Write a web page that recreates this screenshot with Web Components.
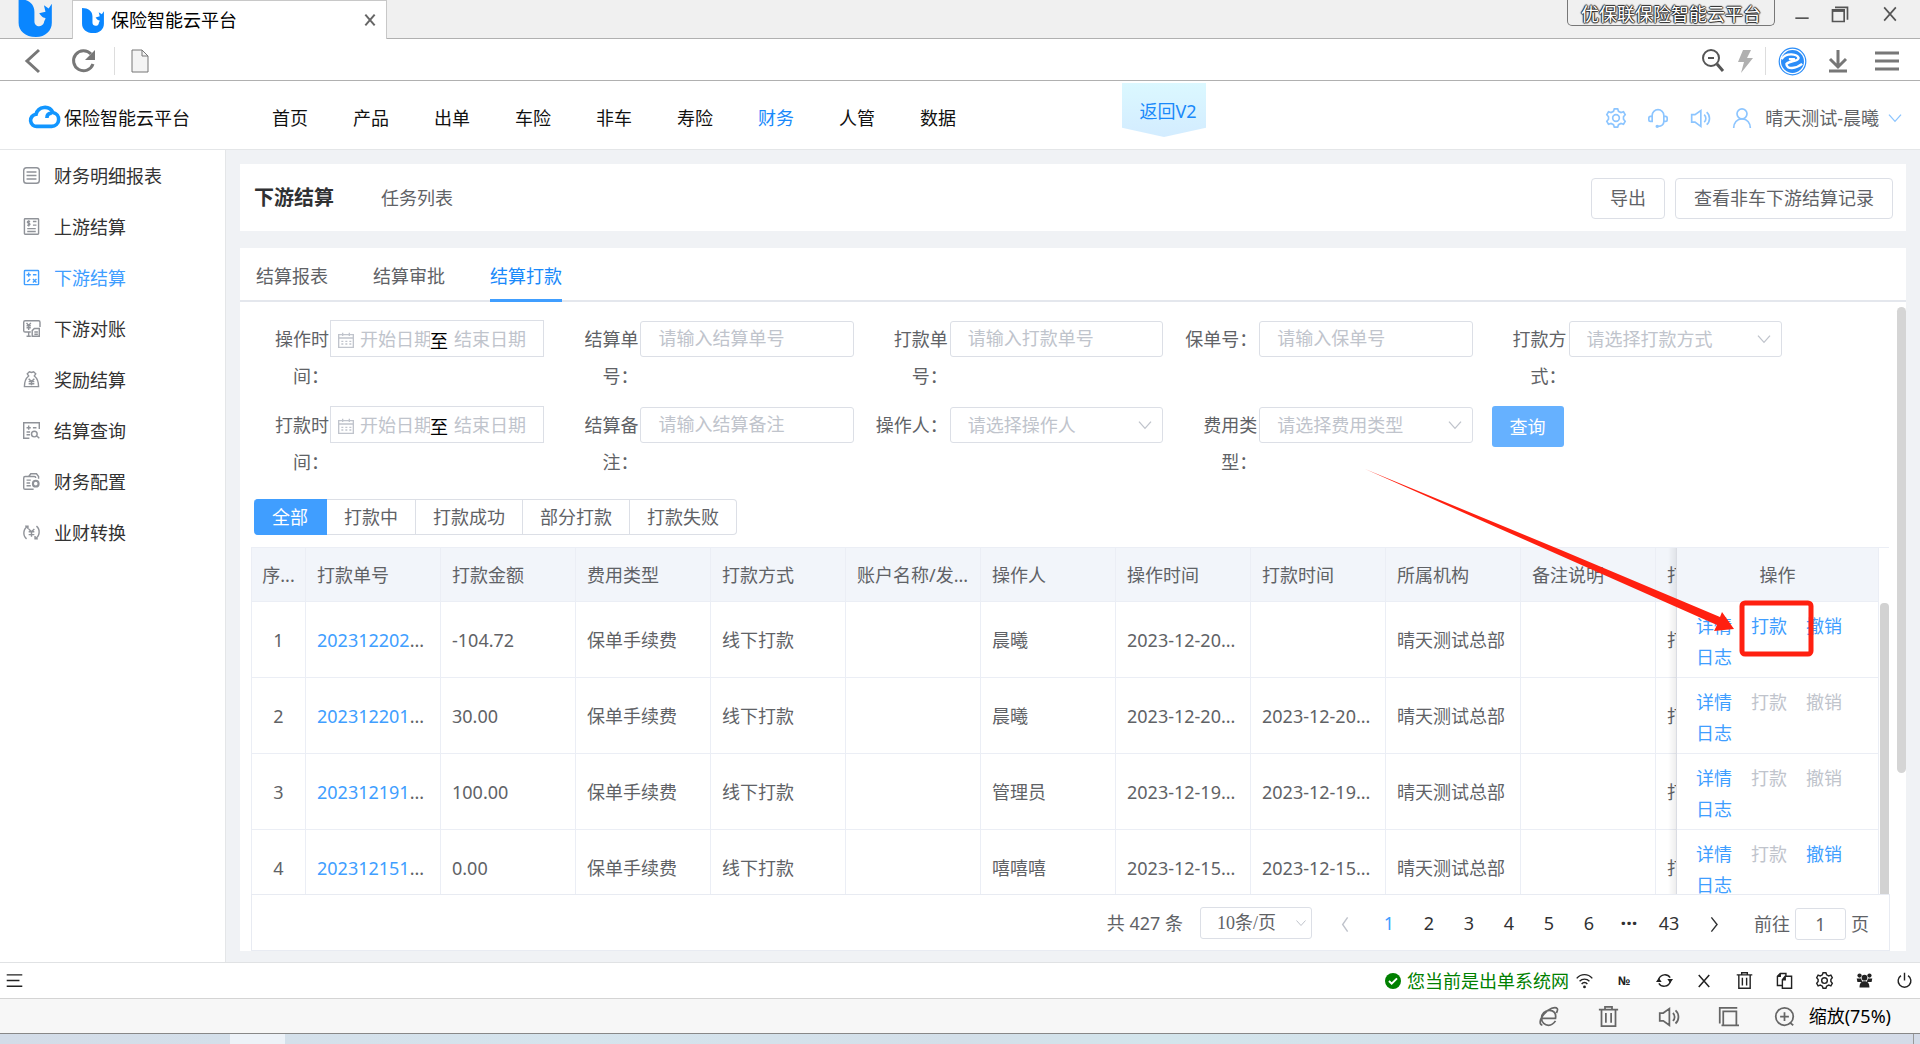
<!DOCTYPE html>
<html lang="zh-CN">
<head>
<meta charset="utf-8">
<title>保险智能云平台</title>
<style>
  html, body {
    margin: 0;
    height: 100%;
  }

  body {
    font: 18px/24px "Noto Sans", "Noto Sans CJK SC", sans-serif;
    color: #606266;
    background: #fff;
    overflow: hidden;
  }
</style>
</head>
<body>
<app-shell></app-shell>

<script>
(() => {
  const define = (name, css, html, setup) => {
    const template = document.createElement("template");
    template.innerHTML = `<style>
      *, *::before, *::after { box-sizing: border-box; }
      button, input, select { font: inherit; color: inherit; margin: 0; }
      button { padding: 0; border: 0; background: none; cursor: pointer; }
      a { color: inherit; text-decoration: none; }
      ${css}
    </style>${html}`;

    customElements.define(name, class extends HTMLElement {
      constructor() {
        super();
        this.attachShadow({ mode: "open" }).appendChild(template.content.cloneNode(true));
      }

      connectedCallback() {
        if (setup && !this._ready) {
          this._ready = true;
          setup(this, this.shadowRoot);
        }
      }
    });
  };

  // All icons sit on a 24 grid and take the current colour.
  const ICONS = {
    logo: '<path fill="#0a86ff" stroke="none" d="M1 0C7 0 11 3 11 8V14C11 18 16 18 17 15C17 14 18 13 18 12C16 12 15 10 14 9L18 8L17 4L20 6L22 3V15C22 20 18 24 12 24C5 24 1 20 1 15Z"/>',
    close: '<path d="M5 4L19 20M19 4L5 20"/>',
    back: '<path d="M17 1L5 12L17 23"/>',
    reload: '<path d="M21 15A10 10 0 1 1 19 5"/><path fill="currentColor" stroke="none" d="M23 1V11H13Z"/>',
    page: '<path fill="#f4f4f4" d="M3 1H13L19 7V23H3Z"/><path d="M13 1V7H19"/>',
    min: '<path d="M4 17H20"/>',
    restore: '<path d="M3 7H17V21H3Z"/><path d="M3 8H17" stroke-width="3"/><path d="M6 4H21V19"/>',
    zoomout: '<circle cx="10" cy="9" r="8"/><path d="M7 9H13"/><path stroke-width="3" d="M16 15L22 22"/>',
    bolt: '<path fill="currentColor" stroke="none" d="M10 1H18L14 9H20L8 24L11 13H5Z"/>',
    browser: '<circle cx="12" cy="12" r="11" stroke-width="1"/><circle cx="12" cy="12" r="9.500" fill="currentColor" stroke="none"/><path stroke="#fff" stroke-width="2" d="M3 10C7 4 16 6 17 9C17 12 10 11 7 14C7 19 15 18 20 14M9 10H14"/>',
    download: '<path d="M12 1V18M4 10L12 18L20 10M3 22H21"/>',
    menu: '<path d="M0 4H24M0 12H24M0 20H24"/>',
    cloud: '<path d="M6 21A5 5 0 0 1 5 11A7.500 7.500 0 0 1 19 9.500A5.800 5.800 0 0 1 18 21ZM18 10C15 10 14 12 14 14"/>',
    gear: '<path d="M10 1H14L15 4L18 5.500L21 4.500L23 8L21 10.500V13.500L23 16L21 19.500L18 18.500L15 20L14 23H10L9 20L6 18.500L3 19.500L1 16L3 13.500V10.500L1 8L3 4.500L6 5.500L9 4Z"/><circle cx="12" cy="12" r="4"/>',
    headset: '<path d="M5 16H3A2 2 0 0 1 1 14V12A2 2 0 0 1 3 10H5ZM5 11V9A7 7 0 0 1 19 9V16C19 20 16 22 12 22M19 10H21A2 2 0 0 1 23 12V14A2 2 0 0 1 21 16H19"/><circle cx="11" cy="22" r="1"/>',
    sound: '<path d="M2 8H6L13 3V22L6 17H2ZM17 8A6 6 0 0 1 17 17M20 5A10 10 0 0 1 20 20"/>',
    user: '<circle cx="12" cy="7" r="6"/><path d="M2 24C2 18 6 13 12 13S22 18 22 24"/>',
    down: '<path d="M3 7L12 17L21 7"/>',
    left: '<path d="M15 2L8 12L15 22"/>',
    right: '<path d="M9 2L17 12L9 22"/>',
    report: '<rect x="1" y="1" width="22" height="22" rx="4"/><path d="M5 7H19M5 12H19M5 17H19"/>',
    bill: '<rect x="2" y="1" width="20" height="22" rx="1"/><path d="M10 5C6 3 5 7 8 7.500S10 11 6 10M8 3V12M14 5H19M14 10H19M6 15H18M6 19H18"/>',
    calc: '<rect x="2" y="2" width="20" height="20" rx="1"/><path d="M5 8H11M8 5V11M14 8H19M6 18L10 14M14 14L19 19M19 14L14 19"/>',
    monitor: '<path d="M11 17H3A2 2 0 0 1 1 15V3A2 2 0 0 1 3 1H22A2 2 0 0 1 24 3V10M5 23H11M8 17V23M5 4L8 8L11 4M5 8H11M5 11H11M8 8V14"/><path d="M16 12H23V23H13V15ZM16 17H21M16 20H21"/>',
    bag: '<path d="M8 7L6 4L9 1L12 2L15 1L18 4L16 7C21 11 22 16 22 22H2C2 16 3 11 8 7ZM8 11L12 15L16 11M8 15H16M8 18H16M12 15V20"/>',
    query: '<path stroke-width="2" d="M9 23H1V1H23V10M5 8H11M8 5V11M14 8H19M5 14H10M5 18H10M20 20L23 23"/><circle cx="16" cy="17" r="4" stroke-width="2"/>',
    config: '<path d="M15 23H3A2 2 0 0 1 1 21V7A2 2 0 0 1 3 5H16A2 2 0 0 1 18 7M8 5L11 1H19L22 5V8M5 10H11M5 14H10M5 18H11"/><circle cx="18" cy="15" r="4" stroke-width="3"/>',
    convert: '<path d="M7 3A11 11 0 0 0 5 21M3 3H7V7M17 21A11 11 0 0 0 19 3M21 21H17V17M8 7L12 11L16 7M8 11H16M8 15H16M12 11V18"/>',
    calendar: '<path d="M1 4H23V23H1ZM1 9H23M7 1V6M17 1V6"/><path stroke-dasharray="3 3" d="M5 14H20M5 18H20"/>',
    lines: '<path d="M1 4H23M1 12H19M1 20H23"/>',
    check: '<circle cx="12" cy="12" r="12" fill="currentColor" stroke="none"/><path stroke="#fff" stroke-width="3" d="M6 12L10 16L18 8"/>',
    wifi: '<path d="M1 9C7 2 17 2 23 9M5 13C9 9 15 9 19 13M8 17C10 14 14 14 16 17"/><circle cx="12" cy="21" r="1"/>',
    refresh: '<path stroke-width="2" d="M4 10A9 9 0 0 1 20 8M20 14A9 9 0 0 1 4 16"/><path fill="currentColor" stroke="none" d="M0 14L4 8L8 14ZM16 10H24L20 16Z"/>',
    trash: '<path d="M1 4H23M8 4V1H16V4M4 4V23H20V4M9 8V19M15 8V19"/>',
    copy: '<path d="M8 19H2V6L6 2H14V5M6 2V6H2M9 11L13 6H22V23H9ZM13 6V11H9"/>',
    users: '<g fill="currentColor" stroke="none"><circle cx="5" cy="5" r="3"/><circle cx="19" cy="5" r="3"/><circle cx="12" cy="8" r="4"/><path d="M1 9H7L9 14H2ZM23 9H17L15 14H22ZM5 22C5 15 8 13 12 13S19 15 19 22Z"/></g>',
    power: '<path d="M7 5A9 9 0 1 0 17 5M12 1V12"/>',
    iebrowser: '<path d="M4 14H20C21 8 18 5 13 5S4 9 4 14S8 22 12 22S18 20 20 17M5 22C1 21 2 15 7 9S20 0 22 3C23 4 22 6 21 8"/>',
    windows: '<path d="M6 6H21V22H6ZM2 20V2H22M4 22H24"/>',
    zoomin: '<circle cx="12" cy="12" r="10"/><path d="M7 12H17M12 7V17M18 19L22 22"/>'
  };

  define("ui-icon", `
    :host { display: inline-flex; flex: none; width: var(--size, 20px); height: var(--size, 20px); }
    svg { width: 100%; height: 100%; fill: none; stroke: currentColor; stroke-width: var(--stroke, 1); overflow: visible; }
  `, `<svg viewBox="0 0 24 24" aria-hidden="true"></svg>`, (host, root) => {
    root.querySelector("svg").innerHTML = ICONS[host.getAttribute("name")] || "";
  });

  define("browser-tabs", `
    :host { display: flex; height: 39px; background: #f0f0f0; border-bottom: 1px solid #b0b0b0; color: #000; }
    .app { --size: 38px; margin: 0 17px; margin-top: -1px; }
    .tab { display: flex; align-items: center; width: 315px; height: 39px; padding: 0 8px; background: #fff; border: 1px solid #c8c8c8; border-bottom: 0; }
    .tab ui-icon { --size: 25px; margin-right: 5px; }
    .tab button { margin-left: auto; display: flex; color: #666; }
    .tab button ui-icon { --size: 16px; --stroke: 3; margin: 0; }
    .window { margin-left: auto; display: flex; align-items: flex-start; padding-right: 20px; color: #555; }
    .badge { height: 26px; padding: 0 13px; line-height: 28px; border: 1px solid #777; border-top: 0; border-radius: 0 0 5px 5px; color: #fff; text-shadow: 1px 0 1px #222, -1px 0 1px #222, 0 1px 1px #222, 0 -1px 1px #222; }
    .window button { display: flex; margin-top: 4px; }
    .window ui-icon { --size: 20px; --stroke: 2; }
    .buttons { display: flex; gap: 18px; margin-left: 17px; }
    .buttons button:last-child { margin-left: 12px; }
  `, `
    <ui-icon class="app" name="logo"></ui-icon>
    <div class="tab">
      <ui-icon name="logo"></ui-icon><span>保险智能云平台</span>
      <button aria-label="关闭标签"><ui-icon name="close"></ui-icon></button>
    </div>
    <div class="window">
      <span class="badge">优保联保险智能云平台</span>
      <div class="buttons">
        <button aria-label="最小化"><ui-icon name="min"></ui-icon></button>
        <button aria-label="还原"><ui-icon name="restore"></ui-icon></button>
        <button aria-label="关闭"><ui-icon name="close"></ui-icon></button>
      </div>
    </div>
  `);

  define("browser-bar", `
    :host { display: flex; align-items: center; height: 42px; padding: 3px 21px 0 22px; border-bottom: 1px solid #b0b0b0; color: #777; }
    button { display: flex; }
    ui-icon { --size: 24px; --stroke: 3; }
    .sep { width: 1px; height: 28px; background: #ddd; }
    .left, .right { display: flex; align-items: center; }
    .left { gap: 26px; }
    .left .sep { margin: 0 -12px 0 -8px; }
    .left ui-icon[name=page] { --stroke: 1; }
    .right { margin-left: auto; gap: 12px; }
    .right ui-icon[name=bolt] { color: #b0b0b0; margin: 0 -4px; }
    .right ui-icon[name=zoomout] { --stroke: 2; color: #555; }
    .right ui-icon[name=browser] { --size: 29px; color: #2b8df8; }
    .right button:nth-of-type(4) { margin-left: 7px; }
    .right button:nth-of-type(5) { margin-left: 13px; }
  `, `
    <div class="left">
      <button aria-label="后退"><ui-icon name="back"></ui-icon></button>
      <button aria-label="刷新"><ui-icon name="reload"></ui-icon></button>
      <span class="sep"></span>
      <ui-icon name="page"></ui-icon>
    </div>
    <div class="right">
      <button aria-label="缩小"><ui-icon name="zoomout"></ui-icon></button>
      <button aria-label="加速"><ui-icon name="bolt"></ui-icon></button>
      <span class="sep"></span>
      <button aria-label="内核"><ui-icon name="browser"></ui-icon></button>
      <button aria-label="下载"><ui-icon name="download"></ui-icon></button>
      <button aria-label="菜单"><ui-icon name="menu"></ui-icon></button>
    </div>
  `);

  define("app-header", `
    :host { display: flex; align-items: center; height: 69px; padding: 5px 17px 0 30px; border-bottom: 1px solid #e4e6e8; color: #111; }
    .brand { display: flex; align-items: center; gap: 5px; }
    .brand ui-icon { --size: 29px; --stroke: 3; color: #1296ff; margin-top: -4px; }
    nav { display: flex; gap: 45px; margin-left: 82px; }
    nav a { white-space: nowrap; }
    nav .on { color: #1989fa; }
    .ribbon { align-self: flex-start; margin: -3px 0 0 166px; width: 84px; height: 54px; padding: 0 0 0 8px; line-height: 56px; text-align: center; color: #1989fa; background: linear-gradient(#dbf8ff, #d3ecff); clip-path: polygon(0 0, 100% 0, 100% 83%, 50% 100%, 0 83%); }
    .user { display: flex; align-items: center; gap: 22px; margin-left: auto; color: #8cc5ff; }
    .user button { display: flex; }
    .user > * > ui-icon, .user > ui-icon { --stroke: 2; }
    .who { align-items: center; gap: 8px; margin-left: -9px; }
    .who span { color: #606266; }
    .who ui-icon { --size: 16px; }
  `, `
    <div class="brand"><ui-icon name="cloud"></ui-icon><span>保险智能云平台</span></div>
    <nav>
      <a href="#">首页</a><a href="#">产品</a><a href="#">出单</a><a href="#">车险</a><a href="#">非车</a>
      <a href="#">寿险</a><a href="#" class="on">财务</a><a href="#">人管</a><a href="#">数据</a>
    </nav>
    <a class="ribbon" href="#">返回V2</a>
    <div class="user">
      <button aria-label="设置"><ui-icon name="gear"></ui-icon></button>
      <button aria-label="客服"><ui-icon name="headset"></ui-icon></button>
      <button aria-label="公告"><ui-icon name="sound"></ui-icon></button>
      <ui-icon name="user"></ui-icon>
      <button class="who"><span>晴天测试-晨曦</span><ui-icon name="down"></ui-icon></button>
    </div>
  `);

  define("side-item", `
    :host { display: block; color: #333; }
    :host([active]) { color: #409eff; }
    a { display: flex; align-items: center; gap: 14px; height: 51px; padding-left: 23px; }
    ui-icon { --size: 17px; --stroke: 2; color: #909399; }
    :host([active]) ui-icon { color: #409eff; }
  `, `<a href="#"><ui-icon></ui-icon><slot></slot></a>`, (host, root) => {
    const old = root.querySelector("ui-icon");
    const icon = document.createElement("ui-icon");
    icon.setAttribute("name", host.getAttribute("icon"));
    old.replaceWith(icon);
  });

  define("side-nav", `
    :host { display: block; width: 226px; flex: none; background: #fff; border-right: 1px solid #e4e6e8; }
  `, `
    <nav>
      <side-item icon="report">财务明细报表</side-item>
      <side-item icon="bill">上游结算</side-item>
      <side-item icon="calc" active>下游结算</side-item>
      <side-item icon="monitor">下游对账</side-item>
      <side-item icon="bag">奖励结算</side-item>
      <side-item icon="query">结算查询</side-item>
      <side-item icon="config">财务配置</side-item>
      <side-item icon="convert">业财转换</side-item>
    </nav>
  `);

  define("page-head", `
    :host { display: flex; align-items: center; height: 67px; padding: 1px 13px 0 14px; background: #fff; }
    h1 { margin: 0 47px 0 0; font-size: 20px; color: #303133; }
    .actions { display: flex; gap: 10px; margin-left: auto; }
    button { height: 41px; padding: 0 18px; border: 1px solid #dcdfe6; border-radius: 4px; background: #fff; }
  `, `
    <h1>下游结算</h1><a href="#">任务列表</a>
    <div class="actions"><button>导出</button><button>查看非车下游结算记录</button></div>
  `);

  define("tab-strip", `
    :host { display: flex; gap: 45px; height: 54px; flex: none; padding-left: 16px; border-bottom: 2px solid #e4e7ed; }
    button { height: 54px; padding-top: 5px; border-bottom: 3px solid transparent; }
    .on { color: #1989fa; border-color: #409eff; }
  `, `<button>结算报表</button><button>结算审批</button><button class="on">结算打款</button>`);

  // One labelled control. kind: text | select | range
  define("filter-field", `
    :host { display: grid; grid-template-columns: 76px 1fr; align-items: start; padding-right: 19px; }
    label { line-height: 37px; padding-top: 1px; text-align: right; padding-right: 1px; }
    .box { display: flex; align-items: center; position: relative; height: 37px; padding-left: 1px; font-family: "Liberation Serif", "Noto Sans CJK SC", serif; color: #c0c4cc; }
    input, select { width: 100%; min-width: 0; padding: 0; border: 0; outline: 0; background: none; appearance: none; }
    input::placeholder { color: #c0c4cc; opacity: 1; }
    .plain { height: 36px; padding: 2px 17px 0; border: 1px solid #dcdfe6; border-radius: 3px; background: #fff; }
    .box > ui-icon[name=down] { --size: 16px; --stroke: 2; position: absolute; right: 10px; pointer-events: none; }
    .range { padding: 2px 0 0 7px; border: 1px solid #dcdfe6; }
    .range ui-icon { --size: 16px; margin-right: 6px; --stroke: 2; }
    .range input { height: 24px; }
    .range input:first-of-type { width: 70px; }
    .range input:last-of-type { flex: 1; }
    .range span { margin-right: 6px; color: #000; font-family: "Noto Sans CJK SC", sans-serif; }
  `, `<label for="control"></label>`, (host, root) => {
    const hint = host.getAttribute("hint");
    const kind = host.getAttribute("kind");
    root.querySelector("label").textContent = host.getAttribute("label");

    const box = document.createElement("div");
    box.className = kind === "range" ? "box range" : "box";
    if (kind === "range") {
      box.innerHTML = `<ui-icon name="calendar"></ui-icon><input id="control" placeholder="开始日期"><span>至</span><input aria-label="结束日期" placeholder="结束日期">`;
    } else if (kind === "select") {
      box.innerHTML = `<select id="control" class="plain"><option>${hint}</option></select><ui-icon name="down"></ui-icon>`;
    } else {
      box.innerHTML = `<input id="control" class="plain" placeholder="${hint}">`;
    }
    root.appendChild(box);
  });

  define("filter-form", `
    :host { display: block; flex: none; padding: 18px 105px 0 14px; }
    form { display: grid; grid-template-columns: repeat(5, 1fr); grid-auto-rows: 74px; row-gap: 12px; }
    button { justify-self: start; width: 72px; height: 41px; border-radius: 3px; background: #66b1ff; color: #fff; }
  `, `
    <form>
      <filter-field kind="range" label="操作时间："></filter-field>
      <filter-field kind="text" label="结算单号：" hint="请输入结算单号"></filter-field>
      <filter-field kind="text" label="打款单号：" hint="请输入打款单号"></filter-field>
      <filter-field kind="text" label="保单号：" hint="请输入保单号"></filter-field>
      <filter-field kind="select" label="打款方式：" hint="请选择打款方式"></filter-field>
      <filter-field kind="range" label="打款时间："></filter-field>
      <filter-field kind="text" label="结算备注：" hint="请输入结算备注"></filter-field>
      <filter-field kind="select" label="操作人：" hint="请选择操作人"></filter-field>
      <filter-field kind="select" label="费用类型：" hint="请选择费用类型"></filter-field>
      <button type="button">查询</button>
    </form>
  `);

  define("status-filter", `
    :host { display: flex; flex: none; margin: 19px 14px 12px; }
    button { height: 36px; padding: 0 17px; border: 1px solid #dcdfe6; border-left: 0; }
    .on { padding: 0 18px; border-color: #409eff; border-radius: 4px 0 0 4px; background: #409eff; color: #fff; }
    button:last-child { border-radius: 0 4px 4px 0; }
  `, `<button class="on">全部</button><button>打款中</button><button>打款成功</button><button>部分打款</button><button>打款失败</button>`);

  const ROWS = [
    ["202312202...", "-104.72", "晨曦", "2023-12-20...", "", [1, 1]],
    ["202312201...", "30.00", "晨曦", "2023-12-20...", "2023-12-20...", [0, 0]],
    ["202312191...", "100.00", "管理员", "2023-12-19...", "2023-12-19...", [0, 0]],
    ["202312151...", "0.00", "嘻嘻嘻", "2023-12-15...", "2023-12-15...", [0, 1]]
  ];

  define("payout-table", `
    :host { display: flex; flex: 1; min-height: 0; margin: 0 17px 0 11px; border-left: 1px solid #ebeef5; border-top: 1px solid #ebeef5; }
    .view { flex: 1; min-width: 0; overflow: hidden; }
    table { width: 1742px; border-collapse: separate; border-spacing: 0; table-layout: fixed; }
    th, td { padding: 0 11px; text-align: left; font-weight: normal; white-space: nowrap; overflow: hidden; background: #fff; border-right: 1px solid #ebeef5; border-bottom: 1px solid #ebeef5; }
    th { height: 54px; background: #f2f5fa; }
    td { height: 76px; }
    .no { width: 54px; padding: 0; text-align: center; }
    .col { width: 135px; }
    .ops { position: sticky; right: 0; width: 203px; overflow: visible; border-left: 1px solid #ebeef5; }
    .ops::before { content: ""; position: absolute; right: 100%; top: 0; bottom: -1px; width: 9px; background: linear-gradient(to left, rgba(0, 0, 0, .08), transparent); }
    th.ops { text-align: center; }
    td.ops { padding: 4px 0 0 19px; }
    .links { display: flex; flex-wrap: wrap; column-gap: 19px; }
    .links button { height: 31px; color: #409eff; }
    .links button:disabled { color: #c0c4cc; }
    a { color: #409eff; }
    .track { width: 10px; padding: 55px 0 0 1px; }
    .thumb { height: 100%; background: #d2d2d2; border-radius: 4px 4px 0 0; }
  `, `
    <div class="view">
      <table>
        <thead><tr><th class="no">序...</th></tr></thead>
        <tbody></tbody>
      </table>
    </div>
    <div class="track"><div class="thumb"></div></div>
  `, (host, root) => {
    const heads = ["打款单号", "打款金额", "费用类型", "打款方式", "账户名称/发...", "操作人", "操作时间", "打款时间", "所属机构", "备注说明", "打"];
    root.querySelector("thead tr").insertAdjacentHTML("beforeend",
      heads.map(h => `<th class="col">${h}</th>`).join("") + `<th class="ops">操作</th>`);

    root.querySelector("tbody").innerHTML = ROWS.map(([id, sum, who, made, paid, can], i) => {
      const number = `<a href="#">${id.slice(0, 9)}</a>${id.slice(9)}`;
      const cells = [number, sum, "保单手续费", "线下打款", "", who, made, paid, "晴天测试总部", "", "打"];
      const off = n => can[n] ? "" : "disabled";
      return `<tr><td class="no">${i + 1}</td>${cells.map(c => `<td>${c}</td>`).join("")}
        <td class="ops"><div class="links"><button>详情</button><button ${off(0)}>打款</button><button ${off(1)}>撤销</button><button>日志</button></div></td></tr>`;
    }).join("");
  });

  define("page-nav", `
    :host { display: flex; align-items: center; justify-content: flex-end; flex: none; height: 57px; margin: 0 16px 0 11px; padding-right: 20px; border: 1px solid #e8ebf2; }
    .size { position: relative; display: flex; align-items: center; margin: 0 9px 0 17px; }
    select { width: 112px; height: 32px; padding: 0 16px; border: 1px solid #dcdfe6; border-radius: 3px; background: #fff; appearance: none; font-family: "Liberation Serif", "Noto Sans CJK SC", serif; }
    .size ui-icon { position: absolute; right: 5px; --size: 12px; color: #c0c4cc; pointer-events: none; --stroke: 2; }
    .pages { display: flex; color: #303133; }
    .pages button { width: 40px; height: 32px; }
    .pages .step { width: 48px; }
    .pages ui-icon { --size: 17px; --stroke: 2; vertical-align: middle; }
    .pages button:disabled { color: #c0c4cc; }
    .pages .on { color: #409eff; }
    .pages .more { font-weight: bold; font-size: 20px; }
    label { display: flex; align-items: center; gap: 5px; margin-left: 17px; padding-top: 2px; }
    input { width: 51px; height: 32px; padding: 0; text-align: center; border: 1px solid #dcdfe6; border-radius: 3px; }
  `, `
    <span>共 427 条</span>
    <div class="size"><select aria-label="每页条数"><option>10条/页</option></select><ui-icon name="down"></ui-icon></div>
    <div class="pages">
      <button class="step" disabled aria-label="上一页"><ui-icon name="left"></ui-icon></button>
      <button class="on">1</button><button>2</button><button>3</button><button>4</button><button>5</button><button>6</button>
      <button class="more">···</button><button>43</button>
      <button class="step" aria-label="下一页"><ui-icon name="right"></ui-icon></button>
    </div>
    <label>前往<input value="1">页</label>
  `);

  // Red frame around the pay action, with an arrow leading to it.
  define("call-out", `
    :host { position: absolute; right: 105px; top: 318px; width: 450px; height: 190px; pointer-events: none; }
    svg { display: block; width: 100%; height: 100%; overflow: visible; }
  `, `
    <svg viewBox="0 0 450 190" aria-hidden="true">
      <path fill="#ff2010" d="M0 1L196 82L355 149L357 144L369 161L349 163L352 157L194 87Z"/>
      <rect x="377" y="135" width="69" height="51" rx="3" fill="none" stroke="#ff2010" stroke-width="5"/>
    </svg>
  `);

  define("main-view", `
    :host { display: flex; flex-direction: column; gap: 17px; flex: 1; min-width: 0; position: relative; padding: 14px 14px 11px; background: #f0f2f5; }
    .card { display: flex; flex: 1; min-height: 0; background: #fff; flex-direction: column; }
    .scroll { display: flex; flex: 1; min-height: 0; }
    .content { display: flex; flex-direction: column; flex: 1; min-width: 0; }
    .bar { position: absolute; right: 14px; top: 157px; bottom: 189px; width: 9px; border-radius: 5px; background: #d5d5d5; }
  `, `
    <page-head></page-head>
    <section class="card">
      <tab-strip></tab-strip>
      <div class="scroll">
        <div class="content">
          <filter-form></filter-form>
          <status-filter></status-filter>
          <payout-table></payout-table>
          <page-nav></page-nav>
        </div>
        <div class="bar"></div>
      </div>
    </section>
    <call-out></call-out>
  `);

  define("tray-bar", `
    :host { display: flex; align-items: center; height: 37px; padding: 0 6px; border-top: 1px solid #e0e2e4; border-bottom: 1px solid #d4d4d4; color: #222; }
    button { display: flex; justify-content: center; align-items: center; }
    ui-icon { --size: 17px; --stroke: 2; }
    .state { display: flex; align-items: center; gap: 6px; margin-left: auto; color: #008000; }
    .state ui-icon { --size: 16px; }
    .tools { display: flex; margin: 0 -10px 0 -5px; }
    .tools button { width: 40px; height: 24px; font-size: 12px; font-weight: bold; }
    .tools ui-icon[name=close] { --size: 18px; }
  `, `
    <button aria-label="菜单"><ui-icon name="lines"></ui-icon></button>
    <span class="state"><ui-icon name="check"></ui-icon>您当前是出单系统网</span>
    <div class="tools">
      <button aria-label="网络"><ui-icon name="wifi"></ui-icon></button>
      <button>№</button>
      <button aria-label="刷新"><ui-icon name="refresh"></ui-icon></button>
      <button aria-label="关闭"><ui-icon name="close"></ui-icon></button>
      <button aria-label="删除"><ui-icon name="trash"></ui-icon></button>
      <button aria-label="复制"><ui-icon name="copy"></ui-icon></button>
      <button aria-label="设置"><ui-icon name="gear"></ui-icon></button>
      <button aria-label="用户"><ui-icon name="users"></ui-icon></button>
      <button aria-label="退出"><ui-icon name="power"></ui-icon></button>
    </div>
  `);

  define("status-bar", `
    :host { display: flex; align-items: center; justify-content: flex-end; gap: 39px; height: 35px; padding-right: 29px; background: #f7f7f7; border-bottom: 1px solid #888; color: #666; }
    button { display: flex; align-items: center; gap: 14px; }
    ui-icon { --size: 21px; --stroke: 2; }
    button:last-child { margin-left: -4px; }
    span { color: #000; }
  `, `
    <button aria-label="浏览器"><ui-icon name="iebrowser"></ui-icon></button>
    <button aria-label="清理"><ui-icon name="trash"></ui-icon></button>
    <button aria-label="声音"><ui-icon name="sound"></ui-icon></button>
    <button aria-label="窗口"><ui-icon name="windows"></ui-icon></button>
    <button><ui-icon name="zoomin"></ui-icon><span>缩放(75%)</span></button>
  `);

  define("desk-strip", `
    :host { display: flex; height: 10px; padding-left: 230px; background: linear-gradient(90deg, #d3dce8, #d5e4ed 30%, #d3dfe9 50%, #d3e5ec 60%, #d4dbe8); }
    div { width: 55px; background: #edf2f8; }
    i { width: 1px; margin: 0 6px 0 auto; background: #999; }
  `, `<div></div><i></i>`);

  define("app-shell", `
    :host { display: flex; flex-direction: column; height: 100vh; }
    :host > * { flex: none; }
    .body { display: flex; flex: 1; min-height: 0; }
  `, `
    <browser-tabs></browser-tabs>
    <browser-bar></browser-bar>
    <app-header></app-header>
    <div class="body">
      <side-nav></side-nav>
      <main-view></main-view>
    </div>
    <tray-bar></tray-bar>
    <status-bar></status-bar>
    <desk-strip></desk-strip>
  `);
})();
</script>
</body>
</html>
